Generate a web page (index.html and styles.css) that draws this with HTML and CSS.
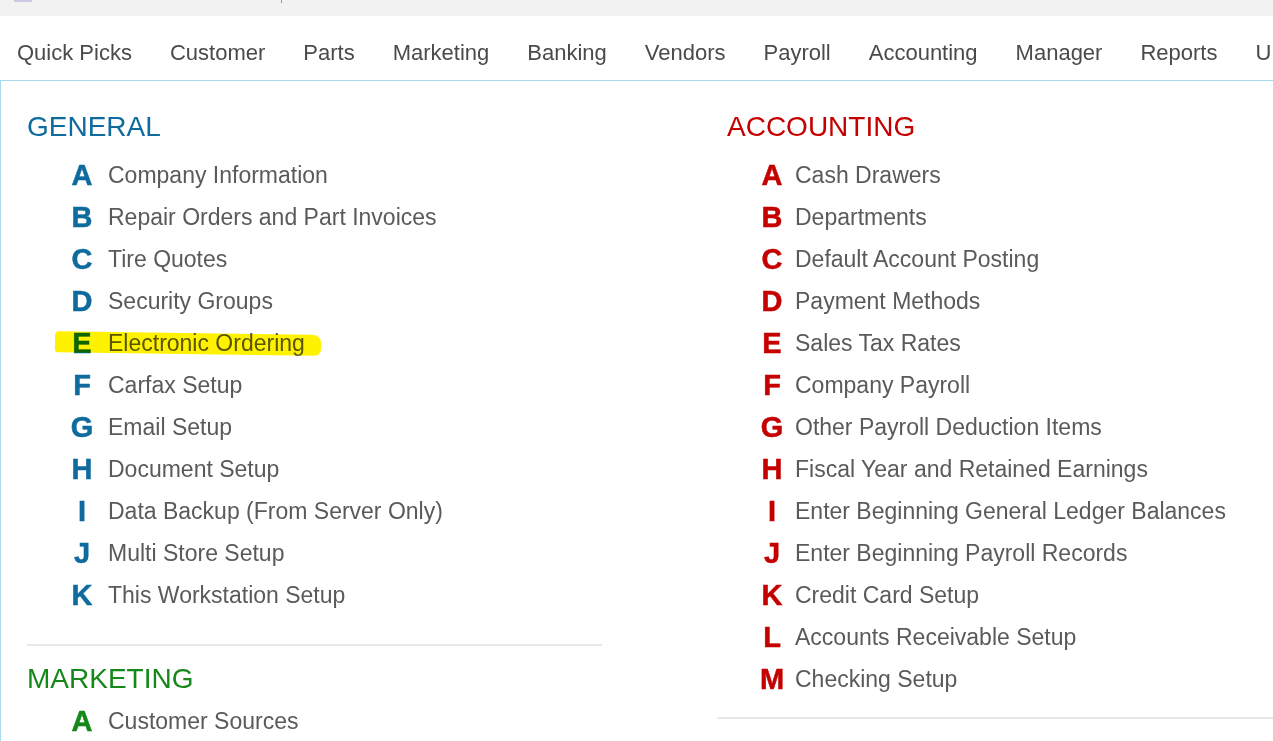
FILE: index.html
```html
<!DOCTYPE html>
<html lang="en">
<head>
  <meta charset="UTF-8" />
  <title>Setup</title>
  <link rel="stylesheet" href="styles.css">
</head>
<body>

<div class="topbar">
  <span class="tab-icon"></span>
  <span class="tab-mark"></span>
</div>

<nav class="menu">
  <a>Quick Picks</a>
  <a>Customer</a>
  <a>Parts</a>
  <a>Marketing</a>
  <a>Banking</a>
  <a>Vendors</a>
  <a>Payroll</a>
  <a>Accounting</a>
  <a>Manager</a>
  <a>Reports</a>
  <a>U</a>
</nav>

<main class="panel">
  <div class="col">
    <section class="group general">
      <h2>GENERAL</h2>
      <ul>
        <li><span class="key">A</span>Company Information</li>
        <li><span class="key">B</span>Repair Orders and Part Invoices</li>
        <li><span class="key">C</span>Tire Quotes</li>
        <li><span class="key">D</span>Security Groups</li>
        <li class="marked"><span class="key">E</span>Electronic Ordering</li>
        <li><span class="key">F</span>Carfax Setup</li>
        <li><span class="key">G</span>Email Setup</li>
        <li><span class="key">H</span>Document Setup</li>
        <li><span class="key">I</span>Data Backup (From Server Only)</li>
        <li><span class="key">J</span>Multi Store Setup</li>
        <li><span class="key">K</span>This Workstation Setup</li>
      </ul>
    </section>
    <section class="group marketing">
      <h2>MARKETING</h2>
      <ul>
        <li><span class="key">A</span>Customer Sources</li>
      </ul>
    </section>
  </div>

  <div class="col">
    <section class="group accounting">
      <h2>ACCOUNTING</h2>
      <ul>
        <li><span class="key">A</span>Cash Drawers</li>
        <li><span class="key">B</span>Departments</li>
        <li><span class="key">C</span>Default Account Posting</li>
        <li><span class="key">D</span>Payment Methods</li>
        <li><span class="key">E</span>Sales Tax Rates</li>
        <li><span class="key">F</span>Company Payroll</li>
        <li><span class="key">G</span>Other Payroll Deduction Items</li>
        <li><span class="key">H</span>Fiscal Year and Retained Earnings</li>
        <li><span class="key">I</span>Enter Beginning General Ledger Balances</li>
        <li><span class="key">J</span>Enter Beginning Payroll Records</li>
        <li><span class="key">K</span>Credit Card Setup</li>
        <li><span class="key">L</span>Accounts Receivable Setup</li>
        <li><span class="key">M</span>Checking Setup</li>
      </ul>
    </section>
  </div>
</main>

</body>
</html>
```

FILE: styles.css
```css
body {
  margin: 0;
  font-family: "Liberation Sans", Arial, sans-serif;
  background: #fff;
  color: #555;
  overflow: hidden;
  height: 741px;
}

.topbar {
  height: 16px;
  background: #f2f2f2;
  position: relative;
}
.tab-icon {
  position: absolute;
  left: 14px; top: 0;
  width: 18px; height: 2px;
  background: #c9c9e6;
}
.tab-mark {
  position: absolute;
  left: 281px; top: 0;
  width: 1px; height: 3px;
  background: #999;
}

.menu {
  display: flex;
  align-items: center;
  box-sizing: border-box;
  height: 65px;
  padding: 10px 0 0 17px;
  gap: 38px;
  white-space: nowrap;
  font-size: 22px;
  color: #4a4a4a;
  border-bottom: 1px solid #a8d9ec;
}
.menu a { flex: none; }

.panel {
  display: grid;
  grid-template-columns: 575px 1fr;
  column-gap: 115px;
  padding-left: 26px;
  border-left: 1px solid #a8d9ec;
  height: 661px;
  overflow: hidden;
}

.group h2 {
  margin: 25px 0 6px;
  font-size: 28px;
  font-weight: normal;
  line-height: 42px;
}
.group ul {
  list-style: none;
  margin: 0;
  padding: 0;
}
.group li {
  position: relative;
  height: 42px;
  line-height: 42px;
  font-size: 23px;
  color: #5a5a5a;
  white-space: nowrap;
}
.key {
  display: inline-block;
  width: 28px;
  margin: 0 12px 0 41px;
  text-align: center;
  font-family: "Liberation Sans", Arial, sans-serif;
  font-size: 29px;
  font-weight: bold;
  -webkit-text-stroke: 0.5px currentColor;
  vertical-align: top;
}

.general { padding-bottom: 28px; border-bottom: 2px solid #e8e8e8; }
.general h2, .general .key { color: #0f6a9e; }

.marketing h2 { margin: 12px 0 0; }
.marketing h2, .marketing .key { color: #16881a; }

.accounting { padding-bottom: 17px; border-bottom: 2px solid #e8e8e8; }
.accounting h2 { padding-left: 10px; }
.accounting h2, .accounting .key { color: #c40000; }
.accounting .key { margin-right: 9px; }

.marked::before {
  content: "";
  position: absolute;
  left: 28px;
  top: 11px;
  width: 266px;
  height: 21px;
  background: #fff200;
  border-radius: 4px 8px 6px 3px;
  transform: rotate(0.8deg);
  mix-blend-mode: multiply;
  z-index: 1;
}
```
